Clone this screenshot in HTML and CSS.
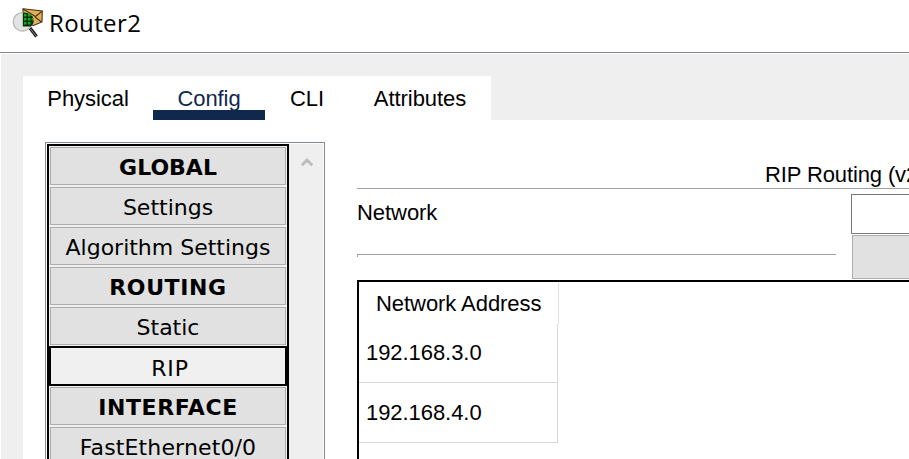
FILE: index.html
```html
<!DOCTYPE html>
<html lang="en">
<head>
<meta charset="utf-8">
<title>Router2</title>
<link rel="stylesheet" href="styles.css">
</head>
<body>
<header class="titlebar">
  <svg class="logo" width="32" height="30" viewBox="0 0 32 30">
    <path d="M11 0.8L30.3 3L30 14L21.5 17.5L11 15Z" fill="#e2b05c" stroke="#4a3510" stroke-width="1.1"/>
    <path d="M11 1L23.5 8.5L30 3.3M23 9L29.5 14" fill="none" stroke="#4a3510" stroke-width="1.1"/>
    <path d="M18 20L24.5 28.5" stroke="#222" stroke-width="3.4"/>
    <path d="M18.5 21L24 28" stroke="#999" stroke-width="0.8"/>
    <circle cx="10.5" cy="13.8" r="9.3" fill="#e3e3e1" stroke="#b4b4b0" stroke-width="1.2"/>
    <path d="M10.8 4.5Q17 4.5 20.5 8.5Q23.5 14 19 18.5H10.8Z" fill="#083008"/>
    <path d="M12 6h2.5v2.5H12zM16 6h2.5v2.5H16zM12 10h2.5v2.5H12zM16 10h2.5v2.5H16zM19.5 10h1.5v2.5h-1.5zM12 14h2.5v2.5H12zM16 14h2.5v2.5H16z" fill="#10b020"/>
  </svg>
  <h1 class="title">Router2</h1>
</header>
<div class="window">
  <nav class="tabs">
    <div class="tab tab-physical">Physical</div>
    <div class="tab tab-config active">Config</div>
    <div class="tab tab-cli">CLI</div>
    <div class="tab tab-attributes">Attributes</div>
  </nav>
  <div class="page">
    <aside class="sidebar">
      <div class="list">
        <div class="item heading">GLOBAL</div>
        <div class="item">Settings</div>
        <div class="item">Algorithm Settings</div>
        <div class="item heading wide">ROUTING</div>
        <div class="item">Static</div>
        <div class="item selected">RIP</div>
        <div class="item heading wide">INTERFACE</div>
        <div class="item port">FastEthernet0/0</div>
      </div>
      <div class="scrollbar">
        <svg width="12" height="10" viewBox="0 0 12 10"><path d="M0.8 8.3L6 3.1L11.2 8.3" fill="none" stroke="#bdbdbd" stroke-width="3"/></svg>
      </div>
    </aside>
    <main class="main">
      <h2 class="heading-text">RIP Routing (v2)</h2>
      <div class="form">
        <div class="form-left">
          <div class="label">Network</div>
          <div class="rule"></div>
        </div>
        <div class="form-right">
          <div class="input"></div>
          <div class="button"></div>
        </div>
      </div>
      <div class="table">
        <div class="th">Network Address</div>
        <div class="td">192.168.3.0</div>
        <div class="td">192.168.4.0</div>
      </div>
    </main>
  </div>
</div>
</body>
</html>
```
FILE: styles.css
```css
* { box-sizing: border-box; }
body {
  margin: 0;
  width: 909px;
  height: 459px;
  overflow: hidden;
  background: #fff;
  color: #000;
  font: 22px/26px "Liberation Sans", Arial, sans-serif;
  letter-spacing: -0.06px;
  white-space: nowrap;
}
.titlebar {
  display: flex;
  height: 53px;
  padding: 8px 0 0 12px;
  border-bottom: 1px solid #838791;
}
.logo { flex: none; }
.title {
  margin: -1px 0 0 5px;
  font: 24px/32px "Open Sans", "Noto Sans", sans-serif;
  letter-spacing: 0.4px;
}
.window {
  height: 405px;
  margin: 1px 0 0 1px;
  padding: 22px 0 0 22px;
  background: #efefef;
}
.tabs {
  display: flex;
  width: 468px;
  height: 44px;
  background: #fff;
}
.tab { padding-top: 10px; text-align: center; }
.tab-physical { width: 130px; }
.tab-config { width: 112px; }
.tab-cli { width: 84px; }
.tab-attributes { width: 142px; }
.active {
  color: #10284c;
  background: linear-gradient(#10284c, #10284c) bottom / 100% 10px no-repeat;
}
.page {
  display: flex;
  height: 339px;
  padding: 22px 0 0 22px;
  background: #fff;
  overflow: hidden;
}
.sidebar {
  display: flex;
  flex: none;
  width: 280px;
  height: 317px;
  padding: 1px 1px 0;
  border: 1px solid #838991;
  border-bottom: 0;
  overflow: hidden;
}
.list {
  width: 242px;
  border: 2px solid #000;
  border-bottom: 0;
  background: #efefef;
  padding-top: 1px;
  font: 22px/38px "DejaVu Sans", Verdana, sans-serif;
  letter-spacing: 0;
}
.item {
  height: 38px;
  margin: 0 1px 2px;
  border: 1px solid #adadad;
  background: #e1e1e1;
  text-align: center;
}
.item.heading { font-weight: bold; }
.item.wide { letter-spacing: 0.6px; }
.item.port { letter-spacing: 0.14px; }
.item.selected {
  height: 40px;
  margin: -1px 0 1px;
  padding: 2px 0 0 4px;
  border: 2px solid #000;
  background: #f0f0f0;
  letter-spacing: 0.9px;
}
.item:not(.selected) { line-height: 40px; }
.scrollbar {
  flex: 1;
  padding: 13px 0 0 12px;
  background: #efefef;
  line-height: 0;
}
.main {
  flex: 1;
  min-width: 0;
  margin-left: 32px;
  overflow: hidden;
}
.heading-text {
  margin: 0;
  height: 47px;
  padding: 20px 0 0 408px;
  border-bottom: 1px solid #a0a0a0;
  font-size: 22px;
  font-weight: normal;
  letter-spacing: -0.12px;
}
.form { display: flex; height: 91px; }
.form-left { width: 479px; padding-top: 11px; }
.rule { height: 3px; margin-top: 28px; border: solid #a0a0a0; border-width: 1px 0 0 1px; }
.form-right { padding: 5px 0 0 15px; flex: 1; }
.input { height: 40px; border: 1px solid #7a7a7a; border-right: 0; }
.button { height: 44px; margin: 1px 0 0 1px; border: 1px solid #adadad; border-right: 0; background: #e1e1e1; }
.table { height: 179px; border: solid #000; border-width: 2px 0 0 2px; }
.th { width: 200px; height: 42px; padding: 9px 0 0 17px; border-right: 1px solid #e2e2e2; }
.td { width: 199px; height: 60px; padding: 17px 0 0 7px; border: solid #d8d8d8; border-width: 0 1px 1px 0; }
.th + .td { height: 59px; padding-top: 16px; }
```
